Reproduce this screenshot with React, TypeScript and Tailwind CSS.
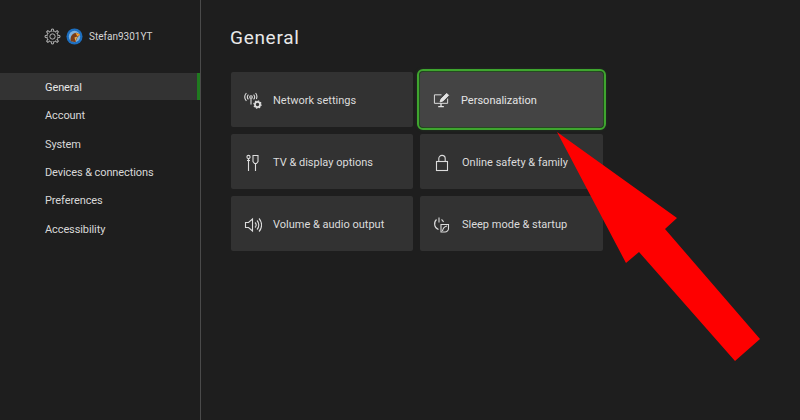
import type { ReactNode } from "react";

const font = { fontFamily: 'Roboto, "Open Sans", sans-serif' };

const NAV = ["General", "Account", "System", "Devices & connections", "Preferences", "Accessibility"];

function GearIcon({ className }: { className?: string }) {
  const teeth = [0, 45, 90, 135, 180, 225, 270, 315];
  return (
    <svg viewBox="0 0 16 16" className={className} fill="none" stroke="currentColor" strokeWidth="0.9">
      <circle cx="8" cy="8" r="2.5" />
      <circle cx="8" cy="8" r="5.2" />
      {teeth.map((a) => (
        <path key={a} d="M6.8 3 L7.2 1 H8.8 L9.2 3" transform={`rotate(${a} 8 8)`} fill="#1e1e1e" />
      ))}
    </svg>
  );
}

function Avatar() {
  return (
    <svg viewBox="0 0 18 18" className="w-[17px] h-[17px]">
      <circle cx="9" cy="9" r="8.5" fill="#1d6fc0" />
      <circle cx="9" cy="9" r="6" fill="#7fb2dd" />
      <path d="M5 14 C4 9 7 5 11 5 L15 7 L12 10 L10 15 Z" fill="#7a3d17" />
      <path d="M10 5 L15 7 L12 9 Z" fill="#f0a030" />
      <path d="M9 10 L12 9 L10 14 Z" fill="#e8b050" />
    </svg>
  );
}

function NetworkIcon() {
  return (
    <svg viewBox="0 0 18 18" className="w-[18px] h-[18px]" fill="none" stroke="currentColor" strokeWidth="1.1">
      <circle cx="7" cy="5" r="1.3" />
      <path d="M7 6.5V12.5" />
      <path d="M4.4 2.6a3.6 3.6 0 0 0 0 4.8M9.6 2.6a3.6 3.6 0 0 1 0 4.8" />
      <path d="M2.4 1a6.2 6.2 0 0 0 0 8M11.6 1a6 6 0 0 1 .8 6" />
      <circle cx="13.5" cy="12.5" r="2.6" strokeWidth="1.8" />
      <circle cx="13.5" cy="12.5" r="3.6" strokeDasharray="1.4 1.4" strokeWidth="1.3" />
    </svg>
  );
}

function CableIcon() {
  return (
    <svg viewBox="0 0 18 18" className="w-[18px] h-[18px]" fill="none" stroke="currentColor" strokeWidth="1.1">
      <circle cx="4.5" cy="3" r="1.6" />
      <path d="M4.5 4.6V17" />
      <path d="M3 6.5H6" />
      <path d="M9 1.5H14V7.5L12.5 9.5H10.5L9 7.5Z" />
      <path d="M11.5 9.5V17M10.5 4H10.6M12.5 4H12.6" />
    </svg>
  );
}

function VolumeIcon() {
  return (
    <svg viewBox="0 0 18 18" className="w-[18px] h-[18px]" fill="none" stroke="currentColor" strokeWidth="1.1">
      <path d="M1.5 6.5H4.5L8.5 3V15L4.5 11.5H1.5Z" />
      <path d="M11 6.5a3.6 3.6 0 0 1 0 5" />
      <path d="M13 4.5a6.5 6.5 0 0 1 0 9" />
      <path d="M15 2.5a9.5 9.5 0 0 1 0 13" />
    </svg>
  );
}

function PersonalizeIcon() {
  return (
    <svg viewBox="0 0 18 18" className="w-[17px] h-[17px]" fill="none" stroke="currentColor" strokeWidth="1">
      <path d="M9 3H1.5V12H15.5V7" />
      <path d="M8.5 12V15M5.5 15.5H11.5" strokeWidth="1.4" />
      <path d="M14.5 1.5L16.5 3.5L10.5 9.5L7.5 10.5L8.5 7.5Z" fill="currentColor" />
    </svg>
  );
}

function LockIcon() {
  return (
    <svg viewBox="0 0 18 18" className="w-[18px] h-[18px]" fill="none" stroke="currentColor" strokeWidth="1.1">
      <rect x="3.5" y="7.5" width="11" height="9" />
      <path d="M5.8 7.5V4.6a3.2 3.2 0 0 1 6.4 0V7.5" />
    </svg>
  );
}

function SleepIcon() {
  return (
    <svg viewBox="0 0 18 18" className="w-[18px] h-[18px]" fill="none" stroke="currentColor" strokeWidth="1.1">
      <path d="M6 1.5V6.5" />
      <path d="M3.5 3.5a6 6 0 0 0 2 10" />
      <path d="M8.5 3.5a6 6 0 0 1 2 2.5" />
      <path d="M8 8.5H15.5V12.5a3.5 3.5 0 0 1 -3.5 3.5H8Z" />
      <path d="M9.5 15C10 12 11.5 10.5 14 10" />
    </svg>
  );
}

function Tile({ icon, label, focused }: { icon: ReactNode; label: string; focused?: boolean }) {
  if (focused) {
    return (
      <div className="h-[55px] flex items-center pl-[13px] gap-[11px] rounded-[3px] bg-[#444444] text-[#e4e4e4] text-[11px] pt-[2px] outline-[2px] outline-[#3fa52f] outline-offset-[1px] shadow-[0_0_5px_#2f8a25]">
        {icon}
        <span className="mt-[2px]">{label}</span>
      </div>
    );
  }
  return (
    <div className="h-[55px] flex items-center pl-[13px] gap-[11px] rounded-[2px] bg-[#323232] text-[#dcdcdc] text-[11px] pt-[2px]">
      {icon}
      <span className="mt-[2px]">{label}</span>
    </div>
  );
}

export default function App() {
  return (
    <div className="relative w-[800px] h-[420px] overflow-hidden bg-[#1e1e1e] flex" style={font}>
      <aside className="w-[201px] h-full shrink-0 border-r border-[#4a4a4a] pt-[26px]">
        <div className="h-[20px] flex items-center pl-[44px] text-[#d4d4d4]">
          <GearIcon className="w-[17px] h-[17px] text-[#b8b8b8]" />
          <div className="ml-[5px]">
            <Avatar />
          </div>
          <span className="ml-[6px] text-[10px]">Stefan9301YT</span>
        </div>
        <nav className="mt-[27px] flex flex-col gap-[1.4px]">
          {NAV.map((item, i) => (
            <div
              key={item}
              className={
                i === 0
                  ? "h-[27px] flex items-center pl-[45px] pt-[3px] text-[11px] tracking-[-0.1px] text-[#e6e6e6] bg-[#333333] border-r-[3px] border-[#1f7a1f]"
                  : "h-[27px] flex items-center pl-[45px] pt-[3px] text-[11px] tracking-[-0.1px] text-[#d8d8d8]"
              }
            >
              {item}
            </div>
          ))}
        </nav>
      </aside>

      <main className="pl-[29px] pt-[25px]">
        <h1 className="text-[19px] leading-[26px] text-[#e8e8e8] tracking-[0.7px]">General</h1>
        <div className="mt-[21px] ml-[1px] grid grid-cols-[182px_183px] gap-x-[7px] gap-y-[7px]">
          <Tile icon={<NetworkIcon />} label="Network settings" />
          <Tile icon={<PersonalizeIcon />} label="Personalization" focused />
          <Tile icon={<CableIcon />} label="TV & display options" />
          <Tile icon={<LockIcon />} label="Online safety & family" />
          <Tile icon={<VolumeIcon />} label="Volume & audio output" />
          <Tile icon={<SleepIcon />} label="Sleep mode & startup" />
        </div>
      </main>

      <svg viewBox="0 0 800 420" className="absolute inset-0 w-[800px] h-[420px] pointer-events-none">
        <polygon
          points="557,132 677,218 665,229 760,339 735,361 639,252 626,263"
          fill="#fe0000"
        />
      </svg>
    </div>
  );
}
